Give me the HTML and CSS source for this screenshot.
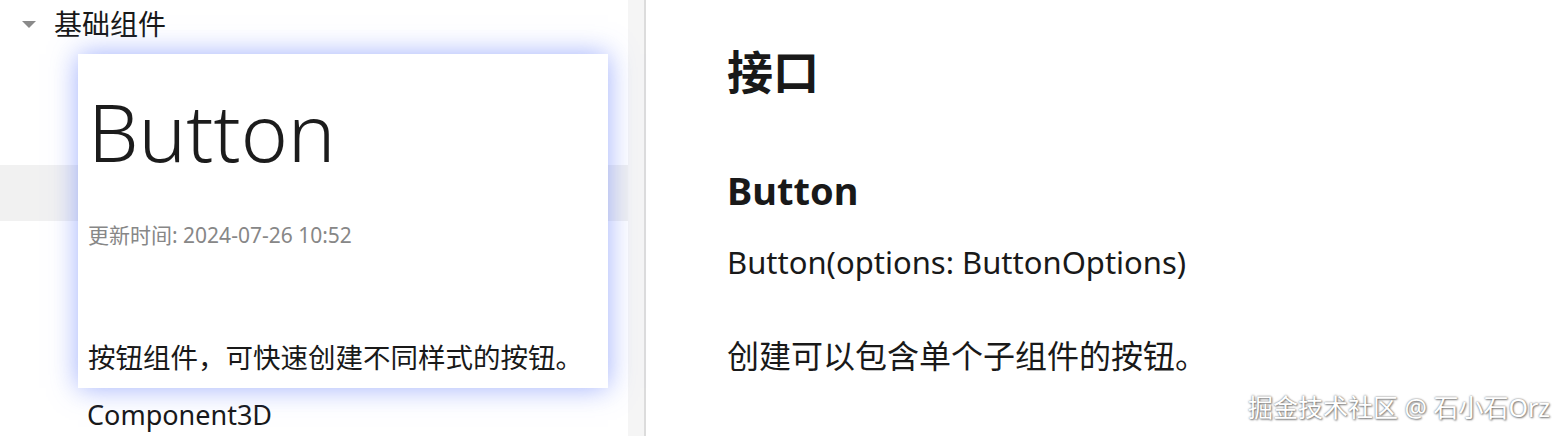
FILE: index.html
```html
<!DOCTYPE html>
<html>
<head>
  <title>Button - 基础组件</title>
  <link rel="stylesheet" href="styles.css">
</head>
<body>
  <div class="page">
    <!-- left navigation tree -->
    <div class="sidebar">
      <div class="tree">
        <div class="tree-head">
          <span class="caret"></span>
          <span class="tree-title">基础组件</span>
        </div>
        <!-- rows hidden behind the hover card -->
        <div class="tree-item"></div>
        <div class="tree-item"></div>
        <div class="tree-item selected"></div>
        <div class="tree-item"></div>
        <div class="tree-item"></div>
        <div class="tree-item"></div>
        <div class="tree-item">Component3D</div>

        <!-- hover card shown over the list -->
        <div class="preview-card">
          <div class="card-title">Button</div>
          <div class="card-time">更新时间: 2024-07-26 10:52</div>
          <div class="card-desc">按钮组件，可快速创建不同样式的按钮。</div>
        </div>
      </div>
      <div class="scroll-track"></div>
    </div>

    <!-- document content -->
    <div class="content">
      <h1 class="doc-h1">接口</h1>
      <h2 class="doc-h2">Button</h2>
      <p class="doc-sig">Button(options: ButtonOptions)</p>
      <p class="doc-text">创建可以包含单个子组件的按钮。</p>
    </div>
  </div>

  <div class="watermark">掘金技术社区 @ 石小石Orz</div>
</body>
</html>
```

FILE: styles.css
```css
body {
  margin: 0;
  padding: 0;
  background-color: #fff;
  color: #191919;
  font-family: "Noto Sans", "Noto Sans CJK SC", sans-serif;
  overflow: hidden;
}

.page {
  display: flex;
  height: 436px;
}

/* sidebar */
.sidebar {
  display: flex;
  width: 646px;
  flex-shrink: 0;
  border-right: 2px solid #dcdcdc;
  box-sizing: border-box;
}

.tree {
  position: relative;
  width: 628px;
}

.scroll-track {
  width: 16px;
  background-color: #f5f5f5;
}

.tree-head {
  display: flex;
  align-items: center;
  height: 48px;
  margin-bottom: 6px;
}

.caret {
  width: 0;
  height: 0;
  margin-left: 22px;
  margin-right: 18px;
  border-left: 7px solid transparent;
  border-right: 7px solid transparent;
  border-top: 7px solid #8a8a8a;
}

.tree-title {
  font-size: 28px;
  line-height: 1;
}

.tree-item {
  height: 55.5px;
  line-height: 55.5px;
  padding-left: 87px;
  font-size: 27px;
  white-space: nowrap;
}

.tree-item.selected {
  background-color: #f1f1f1;
}

/* hover card */
.preview-card {
  position: absolute;
  left: 78px;
  top: 54px;
  width: 530px;
  height: 334px;
  box-sizing: border-box;
  padding: 0 10px;
  background-color: #fff;
  box-shadow: 0 0 26px rgba(80, 110, 250, 0.55);
  display: flex;
  flex-direction: column;
}

.card-title {
  font-size: 80px;
  font-weight: 300;
  line-height: 1;
  margin-top: 37px;
  color: #1c1c1c;
}

.card-time {
  margin-top: 48px;
  font-size: 21px;
  color: #878787;
}

.card-desc {
  margin-top: auto;
  margin-bottom: 12px;
  font-size: 27.5px;
}

/* content */
.content {
  padding-left: 81px;
}

.doc-h1 {
  margin: 43px 0 0;
  font-size: 46px;
  line-height: 56px;
  font-weight: bold;
}

.doc-h2 {
  margin: 68px 0 0;
  font-size: 38px;
  line-height: 46px;
  font-weight: bold;
}

.doc-sig {
  margin: 29px 0 0;
  font-size: 31px;
  line-height: 40px;
}

.doc-text {
  margin: 54px 0 0;
  font-size: 32px;
  line-height: 40px;
}

.watermark {
  position: absolute;
  right: 16px;
  bottom: 12px;
  font-size: 25px;
  color: #fff;
  text-shadow: 0 0 2px #666, 1px 1px 2px #888;
}
```
